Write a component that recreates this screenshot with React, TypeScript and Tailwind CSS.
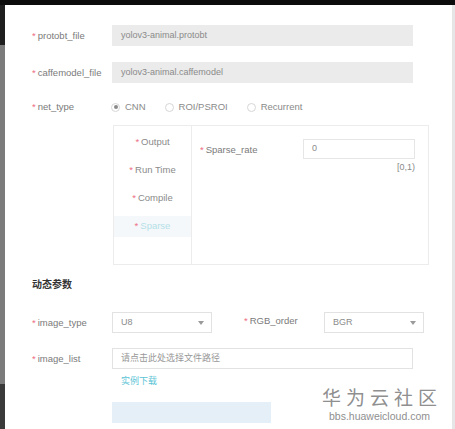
const font = "font-['Liberation_Sans','Noto_Sans_CJK_SC',sans-serif]"

function Label({ text, className = "" }: { text: string; className?: string }) {
  return (
    <div className={"text-[9.5px] text-[#7a7a7a] leading-none " + className}>
      <span className="text-[#ee6f86] mr-[2px]">*</span>
      {text}
    </div>
  )
}

function Radio({ label, checked }: { label: string; checked?: boolean }) {
  return (
    <div className="flex items-center gap-[5px]">
      <span className="w-[9px] h-[9px] rounded-full border border-[#d6d6d6] flex items-center justify-center">
        {checked && <span className="w-[4px] h-[4px] rounded-full bg-[#8a8a8a]" />}
      </span>
      <span className="text-[9.5px] text-[#8a8a8a]">{label}</span>
    </div>
  )
}

function Select({ value, w }: { value: string; w: string }) {
  return (
    <div className={"h-[21px] border border-[#e2e2e2] flex items-center justify-between pl-[8px] pr-[7px] " + w}>
      <span className="text-[9px] text-[#8a8a8a]">{value}</span>
      <svg width="6" height="4" viewBox="0 0 6 4">
        <path d="M0 0h6L3 4z" fill="#9a9a9a" />
      </svg>
    </div>
  )
}

export default function App() {
  const tabs = ["Output", "Run Time", "Compile", "Sparse"]
  return (
    <div className={"w-[455px] h-[429px] flex flex-col bg-black overflow-hidden " + font}>
      <div className="h-[5px] bg-[#0c0c0c]" />
      <div className="flex flex-1 min-h-0">
        {/* backdrop strip */}
        <div className="w-[5px] flex flex-col">
          <div className="h-[40px] bg-[#1e1e1e]" />
          <div className="flex-1 bg-[#7b7b7b]" />
          <div className="h-[45px] bg-[#3a3a3a]" />
        </div>

        <div className="relative flex-1 bg-white flex flex-col pl-[27px] pt-[20px] border-r-[3px] border-[#e6e6e6]">
          <div className="flex items-center">
            <Label text="protobt_file" className="w-[80px]" />
            <div className="w-[301px] h-[21px] bg-[#ebebeb] flex items-center pl-[9px] text-[9px] text-[#8a8a8a]">
              yolov3-animal.protobt
            </div>
          </div>

          <div className="flex items-center mt-[16px]">
            <Label text="caffemodel_file" className="w-[80px]" />
            <div className="w-[301px] h-[21px] bg-[#ebebeb] flex items-center pl-[9px] text-[9px] text-[#8a8a8a]">
              yolov3-animal.caffemodel
            </div>
          </div>

          <div className="flex items-center mt-[17px] h-[14px]">
            <Label text="net_type" className="w-[79px]" />
            <div className="flex items-center gap-[19px]">
              <Radio label="CNN" checked />
              <Radio label="ROI/PSROI" />
              <Radio label="Recurrent" />
            </div>
          </div>

          <div className="ml-[81px] mt-[11px] w-[316px] h-[140px] border border-[#ececec] flex">
            <div className="w-[78px] border-r border-[#ececec] flex flex-col pt-[6px] gap-[7px]">
              {tabs.map((t) => (
                <div
                  key={t}
                  className={
                    "h-[21px] flex items-center justify-center text-[9.5px] " +
                    (t === "Sparse" ? "bg-[#f5f8fa] text-[#b4e0e8]" : "text-[#8a8a8a]")
                  }
                >
                  <span className="text-[#ee6f86] mr-[2px]">*</span>
                  {t}
                </div>
              ))}
            </div>
            <div className="flex-1 pl-[8px] pr-[13px] pt-[13px]">
              <div className="flex items-start justify-between">
                <Label text="Sparse_rate" className="mt-[6px]" />
                <div className="flex flex-col items-end">
                  <div className="w-[112px] h-[20px] border border-[#e6e6e6] flex items-center pl-[8px] text-[9px] text-[#8a8a8a]">
                    0
                  </div>
                  <div className="text-[9px] text-[#8a8a8a] mt-[2px]">[0,1)</div>
                </div>
              </div>
            </div>
          </div>

          <div className="mt-[12px] text-[10px] font-bold text-[#333] leading-[16px]">动态参数</div>

          <div className="flex items-center mt-[19px]">
            <Label text="image_type" className="w-[80px]" />
            <Select value="U8" w="w-[100px]" />
            <Label text="RGB_order" className="w-[80px] ml-[32px] -mt-[4px]" />
            <Select value="BGR" w="w-[100px]" />
          </div>

          <div className="flex items-center mt-[15px]">
            <Label text="image_list" className="w-[80px]" />
            <div className="w-[301px] h-[21px] border border-[#e2e2e2] flex items-center pl-[8px] text-[9px] text-[#999]">
              请点击此处选择文件路径
            </div>
          </div>

          <div className="ml-[89px] mt-[5px] text-[9px] text-[#5cc4d6] leading-[14px]">实例下载</div>

          <div className="ml-[80px] mt-[14px] w-[159px] h-[21px] bg-[#e5eff8]" />

          {/* site watermark */}
          <div className="absolute right-[10px] bottom-[7px] flex flex-col items-center text-[#8f8f8f]">
            <div className="text-[19px] tracking-[5px] leading-[22px] pl-[5px]">华为云社区</div>
            <div className="text-[10.5px] leading-[12px]">bbs.huaweicloud.com</div>
          </div>
        </div>
      </div>
    </div>
  )
}
